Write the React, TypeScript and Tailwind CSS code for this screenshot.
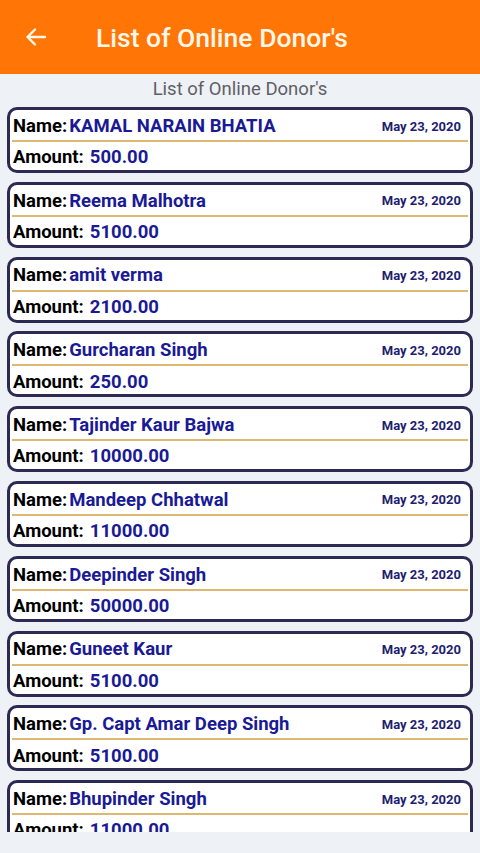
import React from "react";

const donors = [
  { name: "KAMAL NARAIN BHATIA", amount: "500.00" },
  { name: "Reema Malhotra", amount: "5100.00" },
  { name: "amit verma", amount: "2100.00" },
  { name: "Gurcharan Singh", amount: "250.00" },
  { name: "Tajinder Kaur Bajwa", amount: "10000.00" },
  { name: "Mandeep Chhatwal", amount: "11000.00" },
  { name: "Deepinder Singh", amount: "50000.00" },
  { name: "Guneet Kaur", amount: "5100.00" },
  { name: "Gp. Capt Amar Deep Singh", amount: "5100.00" },
  { name: "Bhupinder Singh", amount: "11000.00" },
];

function DonorCard({ name, amount }: { name: string; amount: string }) {
  return (
    <div className="mx-[7px] mb-[8.8px] h-[66px] shrink-0 rounded-[10px] border-[3px] border-[#2c2a52] bg-white">
      {/* Name + date row */}
      <div className="flex h-[30px] items-center justify-between pl-[3px] pr-[9px] pt-[2px]">
        <div className="flex items-baseline text-[18.5px] font-bold leading-none">
          <span className="text-black">Name:</span>
          <span className="ml-[2px] text-[#1a1a96]">{name}</span>
        </div>
        <span className="text-[13px] font-bold leading-none text-[#1e1e70]">
          May 23, 2020
        </span>
      </div>
      <div className="mx-[2px] h-[2px] bg-[#ddb870]" />
      <div className="flex h-[28px] items-center pl-[3px] pt-[3px] text-[18.5px] font-bold leading-none">
        <span className="text-black">Amount:</span>
        <span className="ml-[6px] text-[#1a1a96]">{amount}</span>
      </div>
    </div>
  );
}

export default function App() {
  return (
    <div
      className="flex h-[853px] w-full flex-col bg-[#eef1f6]"
      style={{ fontFamily: "Roboto, 'Noto Sans', sans-serif" }}
    >
      {/* Toolbar */}
      <div className="flex h-[74px] shrink-0 items-center bg-[#ff7506]">
        <svg
          className="ml-[24px] h-[24px] w-[24px]"
          viewBox="0 0 24 24"
          fill="none"
          stroke="#fff7e8"
          strokeWidth="2.4"
          strokeLinecap="round"
          strokeLinejoin="round"
        >
          <path d="M21 12H3.5M11 4.5 3.5 12l7.5 7.5" />
        </svg>
        <h1 className="ml-[48px] pt-[2px] text-[26.5px] font-medium leading-none text-[#fff7e8]">
          List of Online Donor's
        </h1>
      </div>

      {/* List */}
      <div className="flex h-[758px] shrink-0 flex-col overflow-hidden">
        <p className="flex h-[33px] shrink-0 items-center justify-center pb-[2px] text-[18.5px] leading-none text-[#5f5f64]">
          List of Online Donor's
        </p>
        {donors.map((d) => (
          <DonorCard key={d.name} name={d.name} amount={d.amount} />
        ))}
      </div>
    </div>
  );
}
